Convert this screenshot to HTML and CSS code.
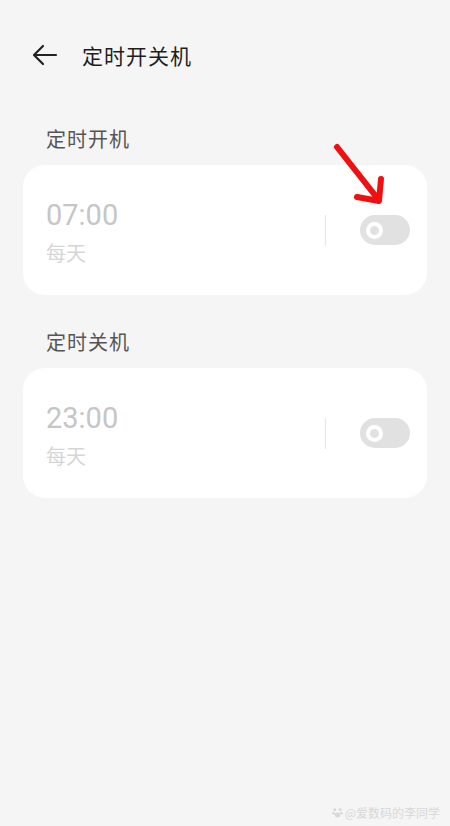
FILE: index.html
```html
<!DOCTYPE html>
<html>
<head>
    <meta charset="UTF-8">
    <title>定时开关机</title>
    <link rel="stylesheet" href="styles.css">
</head>
<body>
    <div class="page">
        <div class="header">
            <svg class="back" width="26" height="22" viewBox="0 0 26 22">
                <path d="M24 11 H3 M11 2 L2 11 L11 20" fill="none" stroke="#222" stroke-width="2.2" stroke-linecap="round" stroke-linejoin="round"/>
            </svg>
            <span class="title">定时开关机</span>
        </div>

        <p class="label">定时开机</p>
        <div class="card">
            <div class="info">
                <div class="time">07:00</div>
                <div class="repeat">每天</div>
            </div>
            <div class="divider"></div>
            <div class="switch"><span class="knob"></span></div>
            <svg class="pointer" width="60" height="70" viewBox="0 0 60 70">
                <path d="M6 6 L47 58 M26 56 L48 60 L50 38" fill="none" stroke="#f01010" stroke-width="6" stroke-linecap="round" stroke-linejoin="round"/>
            </svg>
        </div>

        <p class="label">定时关机</p>
        <div class="card">
            <div class="info">
                <div class="time">23:00</div>
                <div class="repeat">每天</div>
            </div>
            <div class="divider"></div>
            <div class="switch"><span class="knob"></span></div>
        </div>

        <div class="watermark">
            <svg width="11" height="11" viewBox="0 0 12 12">
                <g fill="#d8d8d8">
                    <circle cx="3" cy="3" r="1.6"/>
                    <circle cx="9" cy="3" r="1.6"/>
                    <circle cx="1.6" cy="6.8" r="1.4"/>
                    <circle cx="10.4" cy="6.8" r="1.4"/>
                    <ellipse cx="6" cy="8.6" rx="3" ry="2.6"/>
                </g>
            </svg>
            <span>@爱数码的李同学</span>
        </div>
    </div>
</body>
</html>
```

FILE: styles.css
```css
body {
    margin: 0;
    padding: 0;
    background-color: #f5f5f5;
    font-family: "Noto Sans CJK SC", "Noto Sans", sans-serif;
}

.page {
    height: 826px;
    padding: 0 23px;
    position: relative;
    box-sizing: border-box;
}

.header {
    display: flex;
    align-items: center;
    height: 110px;
    padding-left: 9px;
}

.back {
    margin-right: 24px;
}

.title {
    font-size: 21px;
    color: #1e1e1e;
    letter-spacing: 1px;
}

.label {
    margin: 0 0 0 23px;
    padding: 16px 0 13px;
    line-height: 26px;
    font-size: 20px;
    color: #555;
    letter-spacing: 1px;
}

.card {
    position: relative;
    display: flex;
    align-items: center;
    height: 130px;
    margin-bottom: 18px;
    padding: 0 17px 0 23px;
    background-color: #fff;
    border-radius: 22px;
}

.info {
    flex: 1;
    padding-top: 9px;
}

.time {
    font-family: Roboto, "Noto Sans", sans-serif;
    font-size: 29px;
    line-height: 36px;
    color: #c6c6c6;
}

.repeat {
    font-size: 20px;
    line-height: 40px;
    color: #d6d6d6;
}

.divider {
    width: 1px;
    height: 31px;
    background-color: #e6e6e6;
    margin-right: 34px;
}

.switch {
    width: 50px;
    height: 30px;
    border-radius: 15px;
    background-color: #e1e1e1;
    display: flex;
    align-items: center;
    padding-left: 6px;
    box-sizing: border-box;
}

.knob {
    width: 9px;
    height: 9px;
    border-radius: 50%;
    background-color: #e1e1e1;
    border: 4px solid #fff;
}

.pointer {
    position: absolute;
    left: 308px;
    top: -24px;
}

.watermark {
    position: absolute;
    right: 10px;
    bottom: 5px;
    display: flex;
    align-items: center;
    gap: 2px;
    font-size: 12px;
    color: #d8d8d8;
}
```
